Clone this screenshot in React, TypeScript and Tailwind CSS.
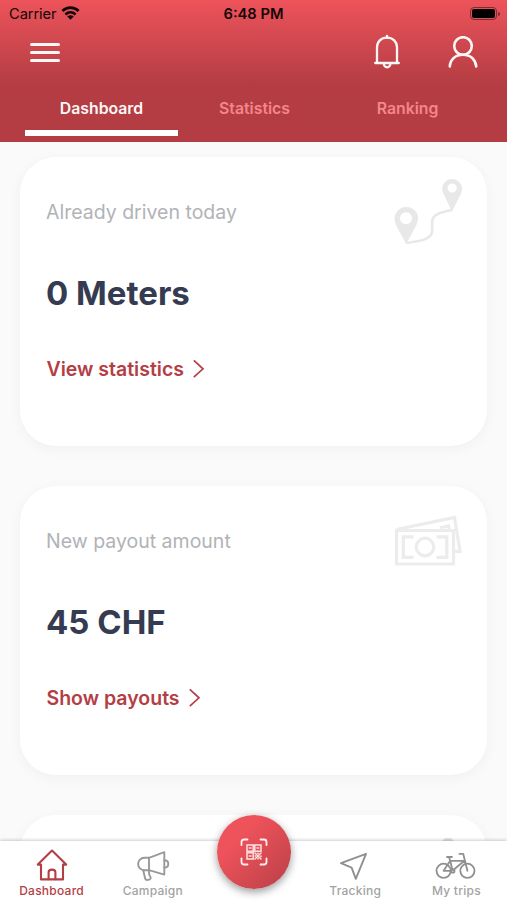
import type { ReactNode } from 'react'

const BellIcon = () => (
  <svg width="28" height="36" viewBox="0 0 28 36" fill="none" stroke="#fff6f6" strokeWidth="2.3" strokeLinecap="round">
    <path d="M4 28.8V13.6C4 7.5 8.1 3.6 14 3.6S24 7.5 24 13.6V28.8" />
    <path d="M2.2 29H25.8" />
    <path d="M14 3.4V1.8M10.8 29.8a3.3 3.6 0 0 0 6.6 0" />
  </svg>
)

const UserIcon = () => (
  <svg width="30" height="32" viewBox="0 0 30 32" fill="none" stroke="#fff6f6" strokeWidth="2.6" strokeLinecap="round">
    <circle cx="15" cy="10" r="8.8" />
    <path d="M1.8 30.4C2.2 23.4 7.4 18.8 15 18.8S27.6 23.4 28.2 30.4" />
  </svg>
)

const WifiIcon = () => (
  <svg width="19" height="14" viewBox="0 0 18 14" fill="none" stroke="#140607" strokeWidth="2.7">
    <path d="M.9 5C5.6.6 12.4.6 17.1 5" />
    <path d="M3.9 8.4c3-2.7 7.2-2.7 10.2 0" />
    <path d="M9 13.7 5.7 10.5c1.8-1.6 4.8-1.6 6.6 0Z" fill="#140607" stroke="none" />
  </svg>
)

const RouteIcon = () => (
  <svg width="70" height="70" viewBox="0 0 70 70" fill="#e8e8e8">
    <path d="M14 66C30 64 39 62 40 55C41 47 38 42 44 38C49 35 54 34 60 33" fill="none" stroke="#e8e8e8" strokeWidth="2.6" />
    <path fillRule="evenodd" d="M14.2 67 4.2 48.5C1.8 42.5 2 38.3 4.8 35A11.6 11.6 0 0 1 24 35C26.7 38.6 26.6 42.5 24.4 48ZM14 35.2a6 6 0 1 0 0 12 6 6 0 0 0 0-12Z" />
    <path fillRule="evenodd" d="M60 34.5 51.8 17.5C50.3 14 50 11.8 50.4 9.8A10 10 0 0 1 69.9 9.8C70.3 12 70 14 68.6 17.5ZM60.2 6.5a4.6 4.6 0 1 0 0 9.2 4.6 4.6 0 0 0 0-9.2Z" />
  </svg>
)

const MoneyIcon = () => (
  <svg width="70" height="52" viewBox="0 0 70 52" fill="none" stroke="#ececec" strokeWidth="3.2">
    <path d="M4.5 15.5H61.5V49H4.5Z" />
    <path d="M4.5 14.5 62.5 2.5 68 36.3H62M48 12.8l8.5-1.8.8 4" />
    <path d="M21.5 21.8H11.3V42.3H21.5M44.5 21.8H54.8V42.3H44.5" />
    <circle cx="33" cy="32" r="8.8" />
  </svg>
)

const HomeIcon = () => (
  <svg width="34" height="34" viewBox="0 0 34 34" fill="none" stroke="#b43e45" strokeWidth="2.1" strokeLinecap="round" strokeLinejoin="round">
    <path d="M2.8 16.6 17 2.6 31.2 16.6M2.8 16.6H6V31.4H28V16.6H31.2" />
    <path d="M13.6 31.2V24.3Q13.6 21.6 17 21.6T20.4 24.3V31.2" />
  </svg>
)

const MegaphoneIcon = () => (
  <svg width="34" height="34" viewBox="0 0 34 34" fill="none" stroke="#999" strokeWidth="1.9" strokeLinecap="round" strokeLinejoin="round">
    <path d="M13 9.8H8.3a6 6 0 0 0 0 12.4H13L28.3 26.6V4.2Z" />
    <path d="M13 9.8V22.2M28.3 12.2C33.6 12.2 33.6 19.6 28.3 19.6" />
    <path d="M7.2 22.3 9.2 30.8c.4 1.7 4.8 1.5 5.5-.6.4-1.2-1.7-2.6-1.6-4.4V22.4" />
  </svg>
)

const TrackingIcon = () => (
  <svg width="30" height="30" viewBox="0 0 30 30" fill="none" stroke="#909090" strokeWidth="1.9" strokeLinejoin="round">
    <path d="M1 13.2 26 3.8 15.8 28.8 11.6 17.6Z" />
  </svg>
)

const BikeIcon = () => (
  <svg width="42" height="30" viewBox="0 0 42 30" fill="none" stroke="#909090" strokeWidth="1.8" strokeLinecap="round" strokeLinejoin="round">
    <circle cx="8.6" cy="20.8" r="7.1" />
    <circle cx="32.4" cy="20.8" r="7.1" />
    <path d="M8.6 20.8 15.2 10.8 17.4 19.8M18.6 19.8 29.4 10.8H15.2L14 7.2M12 7H17M8.6 20.8H16.4M32.4 20.8 28.2 3.8H24.4" />
    <circle cx="17.8" cy="21" r="1.7" />
  </svg>
)

const QrIcon = () => (
  <svg width="28" height="28" viewBox="0 0 28 28" fill="none" stroke="#fff0f0" strokeWidth="1.8" strokeLinecap="round">
    <path d="M1.5 7V4Q1.5 1.5 4 1.5H7.5M20.5 1.5H24Q26.5 1.5 26.5 4V7M26.5 20.5V24Q26.5 26.5 24 26.5H20.5M7.5 26.5H4Q1.5 26.5 1.5 24V20.5" />
    <g strokeWidth="1.5" stroke="#ffe0e1">
      <rect x="7" y="7" width="6.2" height="6.2" />
      <rect x="14.8" y="7" width="6.2" height="6.2" />
      <rect x="7" y="14.8" width="6.2" height="6.2" />
      <path d="M9.2 10.1h1.8M17 10.1h1.8M9.2 17.9h1.8M15 15l6 6M21 15l-6 6M15 18h.6M18 15v.4M21 18v.4M18 21v-.4" />
    </g>
  </svg>
)

const Chevron = () => (
  <svg className="ml-2" width="13" height="20" viewBox="0 0 13 20" fill="none" stroke="#b43e45" strokeWidth="1.7">
    <path d="M1.8 1.4 11 9.8 1.8 18.2" />
  </svg>
)

type CardProps = {
  label: string
  value: string
  link: string
  icon: ReactNode
  iconClass: string
}

const Card = ({ label, value, link, icon, iconClass }: CardProps) => (
  <section className="relative h-[289px] shrink-0 rounded-[36px] bg-white px-[26px] pt-[41px] shadow-[0_3px_14px_rgba(0,0,0,0.045)]">
    <div className={`absolute ${iconClass}`}>{icon}</div>
    <p className="text-[19.5px] leading-7 text-[#b1b3b7]">{label}</p>
    <p className="mt-[47px] text-[33px] leading-10 font-bold text-[#353b50]">{value}</p>
    <a className="mt-[42px] flex items-center pl-[0.5px] text-[19.5px] leading-7 font-semibold text-[#b43e45]">
      {link}
      <Chevron />
    </a>
  </section>
)

const NavItem = ({ label, icon, active }: { label: string; icon: ReactNode; active?: boolean }) => (
  <div className="flex flex-1 flex-col items-center">
    <div className="mt-[6px] flex h-[35px] items-center">{icon}</div>
    <span className={`text-[12px] leading-[17px] font-medium tracking-[0.25px] ${active ? 'text-[#b43e45]' : 'text-[#a3a3a3]'}`}>{label}</span>
  </div>
)

export default function App() {
  return (
    <div className="relative flex h-[900px] w-[507px] flex-col overflow-hidden bg-[#fafafa] font-['Inter',sans-serif]">
      <header className="flex h-[142px] shrink-0 flex-col bg-linear-to-b from-[#ee535b] from-0% to-[#b33d43] to-60%">
        <div className="grid h-[27px] grid-cols-3 items-center text-[14.7px] text-[#140607]">
          <div className="flex items-center gap-[5px] pl-[9px]">
            <span className="mt-px tracking-[-0.1px]">Carrier</span>
            <WifiIcon />
          </div>
          <span className="mt-px text-center font-semibold">6:48 PM</span>
          <div className="flex items-center justify-end gap-px pr-[7px]">
            <div className="rounded-[4px] border border-[#7d2c30] p-px">
              <div className="h-[9px] w-[23px] rounded-[2px] bg-black" />
            </div>
            <div className="h-1 w-[2px] rounded-r bg-[#7d2c30]" />
          </div>
        </div>
        <div className="flex h-[50px] items-center pr-[29px] pl-[30px]">
          <div className="flex flex-1 flex-col gap-[5px]">
            <div className="h-[3px] w-[30px] rounded-full bg-[#fff6f6]" />
            <div className="h-[3px] w-[30px] rounded-full bg-[#fff6f6]" />
            <div className="h-[3px] w-[30px] rounded-full bg-[#fff6f6]" />
          </div>
          <BellIcon />
          <div className="ml-[47px]">
            <UserIcon />
          </div>
        </div>
        <nav className="flex flex-1 pl-[25px] text-[15.8px] leading-6 font-semibold">
          <div className="flex w-[153px] flex-col items-center">
            <span className="mt-5 text-[#fff6f6]">Dashboard</span>
            <div className="mt-[9px] h-[6px] w-full bg-white" />
          </div>
          <span className="mt-5 w-[153px] text-center text-[#f5868b]">Statistics</span>
          <span className="mt-5 w-[153px] text-center text-[#f5868b]">Ranking</span>
        </nav>
      </header>

      <main className="flex min-h-0 flex-1 flex-col gap-[40px] overflow-hidden px-5 pt-[15px]">
        <Card label="Already driven today" value="0 Meters" link="View statistics" icon={<RouteIcon />} iconClass="top-[20px] right-[25px]" />
        <Card label="New payout amount" value="45 CHF" link="Show payouts" icon={<MoneyIcon />} iconClass="top-[29px] right-[25px]" />
        <section className="flex h-[289px] shrink-0 justify-end rounded-[36px] bg-white pt-[23px] pr-[31px] shadow-[0_3px_14px_rgba(0,0,0,0.045)]">
          <div className="size-4 rounded-full bg-[#dedede]" />
        </section>
      </main>

      <footer className="relative flex h-[59px] shrink-0 bg-white pl-px shadow-[0_-1px_3px_rgba(0,0,0,0.2)]">
        <NavItem label="Dashboard" icon={<HomeIcon />} active />
        <NavItem label="Campaign" icon={<MegaphoneIcon />} />
        <div className="flex-1" />
        <NavItem label="Tracking" icon={<TrackingIcon />} />
        <NavItem label="My trips" icon={<BikeIcon />} />
        <button className="absolute -top-[26px] left-[217px] flex size-[74px] items-center justify-center rounded-full bg-linear-to-br from-[#ee525b] from-30% to-[#b94047] shadow-[0_3px_8px_rgba(0,0,0,0.4)]">
          <QrIcon />
        </button>
      </footer>
    </div>
  )
}
